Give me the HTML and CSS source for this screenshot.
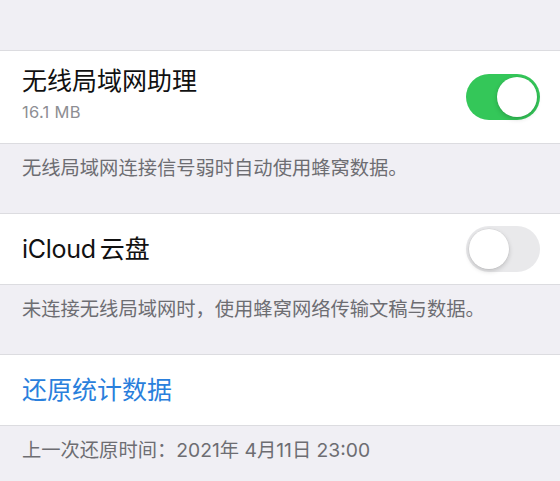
FILE: index.html
```html
<!DOCTYPE html>
<html lang="zh-CN">
<head>
    <meta charset="UTF-8">
    <meta name="viewport" content="width=device-width, initial-scale=1.0">
    <title>蜂窝数据</title>
    <link rel="stylesheet" href="styles.css">
</head>
<body>

    <div class="top-gap"></div>

    <!-- 无线局域网助理 -->
    <div class="grupo">
        <div class="linha linha-alta">
            <div class="textos">
                <div class="titulo">无线局域网助理</div>
                <div class="subtitulo">16.1 MB</div>
            </div>
            <div class="chave ligada"><span class="bolinha"></span></div>
        </div>
    </div>
    <p class="rodape">无线局域网连接信号弱时自动使用蜂窝数据。</p>

    <!-- iCloud 云盘 -->
    <div class="grupo">
        <div class="linha">
            <div class="titulo"><span class="latino">iCloud</span>云盘</div>
            <div class="chave"><span class="bolinha"></span></div>
        </div>
    </div>
    <p class="rodape">未连接无线局域网时，使用蜂窝网络传输文稿与数据。</p>

    <!-- 还原统计数据 -->
    <div class="grupo">
        <div class="linha">
            <div class="titulo azul">还原统计数据</div>
        </div>
    </div>
    <p class="rodape">上一次还原时间：2021年 4月11日 23:00</p>

</body>
</html>
```

FILE: styles.css
```css
* { margin: 0; padding: 0; box-sizing: border-box; }
body { background: #f0eff4; color: #111; font-family: Inter, "Noto Sans CJK SC", sans-serif; width: 560px; height: 481px; overflow: hidden; }
.top-gap { height: 50px; }
.grupo { background: #fff; border-top: 1px solid #dcdce0; border-bottom: 1px solid #dcdce0; }
.linha { display: flex; align-items: center; justify-content: space-between; height: 70px; padding: 0 20px 0 22px; }
.linha-alta { height: 92px; }
.textos { display: flex; flex-direction: column; gap: 6px; margin-bottom: 6px; }
.titulo { font-size: 25px; line-height: 30px; color: #111; }
.latino { margin-right: 4px; letter-spacing: -0.3px; }
.subtitulo { font-size: 16.5px; line-height: 20px; color: #8e8e93; letter-spacing: 0.3px; }
.azul { color: #2a7fdc; }
.rodape { height: 69px; padding: 11px 22px 0; font-size: 19.3px; line-height: 26px; color: #6d6d72; }
.chave { width: 74px; height: 46px; border-radius: 23px; background: #e9e9eb; padding: 3px; display: flex; }
.chave.ligada { background: #34c759; justify-content: flex-end; }
.bolinha { width: 40px; height: 40px; border-radius: 50%; background: #fff; box-shadow: 0 2px 5px rgba(0,0,0,0.18), 0 0 0 0.5px rgba(0,0,0,0.06); }
```
